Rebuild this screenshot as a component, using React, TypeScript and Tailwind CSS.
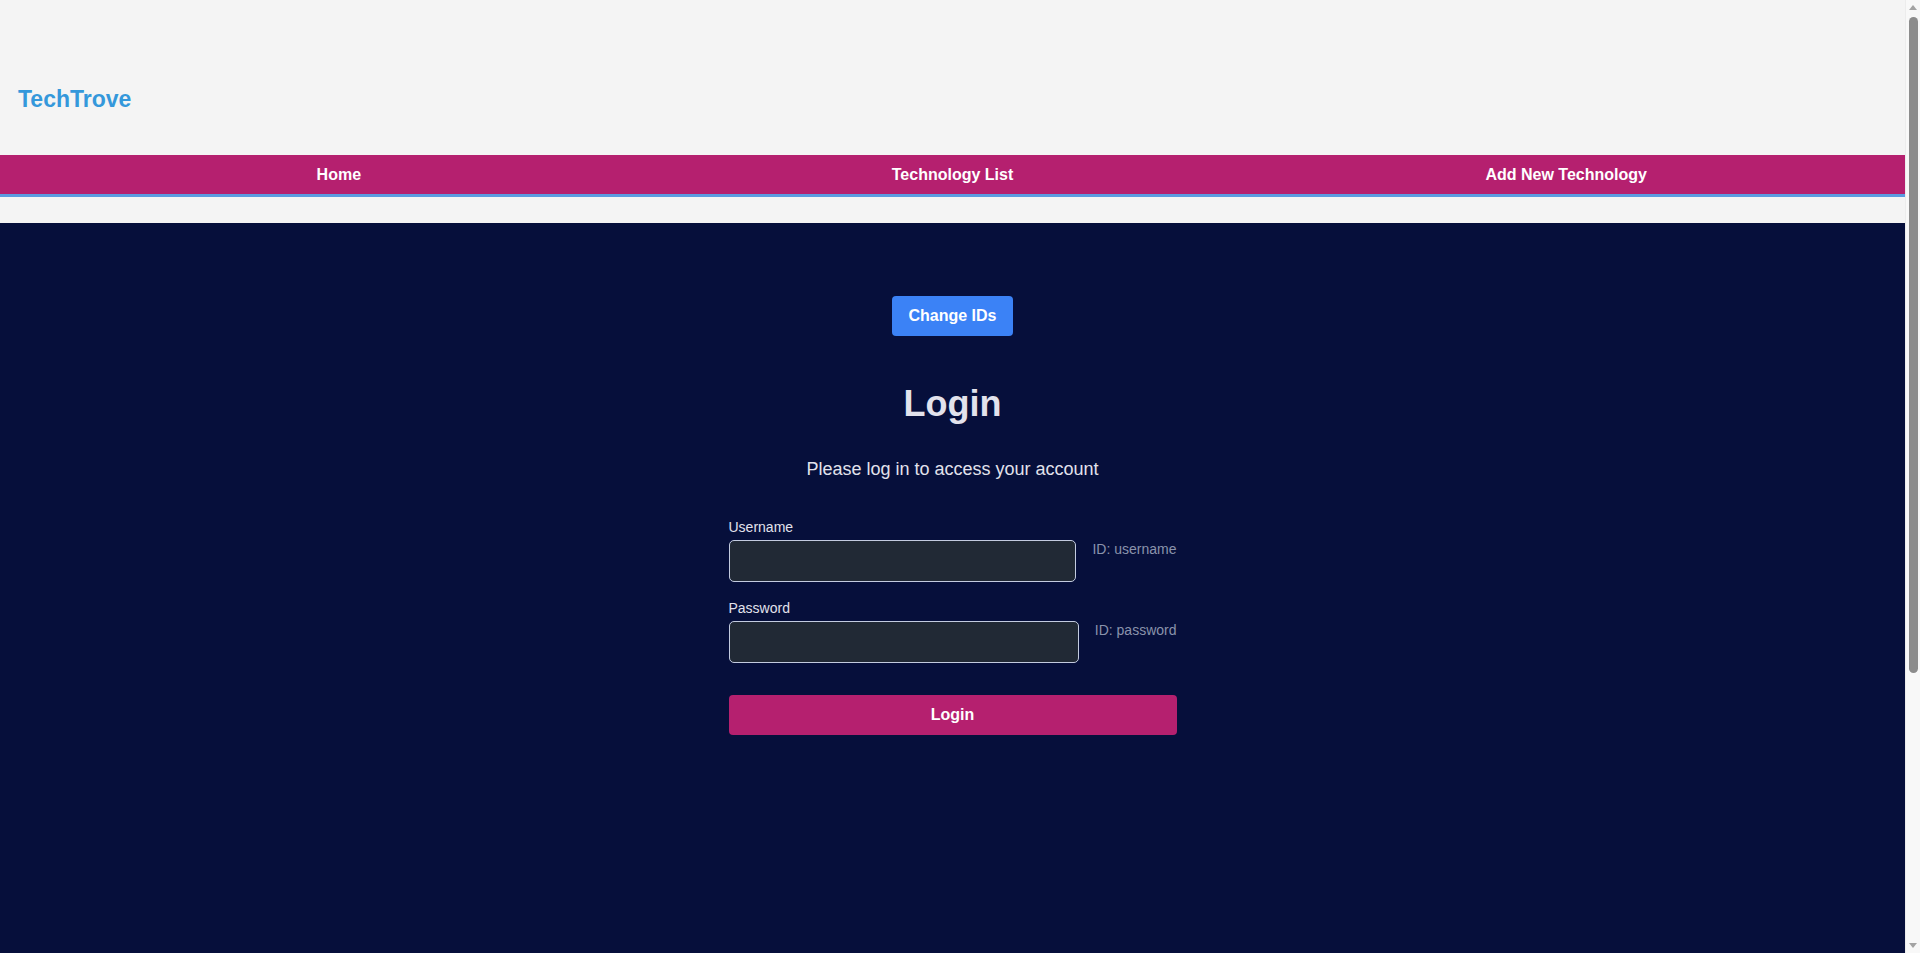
import { useState } from 'react'

function Field({ label, id, type = 'text' }: { label: string; id: string; type?: string }) {
  const [value, setValue] = useState('')
  return (
    <div>
      <label className="block text-sm leading-5 text-[#e2e2ec] mb-[3px]">{label}</label>
      <div className="flex items-start gap-4">
        <input
          type={type}
          value={value}
          onChange={(e) => setValue(e.target.value)}
          className="h-[42px] flex-1 rounded-[5px] border border-[#c3cbe0] bg-[#212935] px-3 text-[#e2e2ec] outline-none"
        />
        <span className="text-sm leading-5 text-[#8a93ab] mt-[-1px]">ID: {id}</span>
      </div>
    </div>
  )
}

export default function App() {
  return (
    <div className="flex h-screen overflow-hidden bg-[#f4f4f4] font-['Liberation_Sans',Arial,sans-serif]">
      <div className="flex-1 overflow-y-auto [scrollbar-width:none]">
        {/* Header */}
        <header className="h-[155px] px-[18px] pt-[85px]">
          <h1 className="text-[23px] leading-[28px] font-bold text-[#3498db]">TechTrove</h1>
        </header>

        {/* Nav */}
        <nav className="flex h-[42px] items-center bg-[#b5206f] border-b-[3px] border-[#5b9be0] px-8">
          {['Home', 'Technology List', 'Add New Technology'].map((item) => (
            <a key={item} href="#" className="flex-1 text-center text-base font-bold text-white">
              {item}
            </a>
          ))}
        </nav>

        <div className="h-[26px]" />

        {/* Login */}
        <main className="min-h-[1102px] bg-[#060f3b] flex flex-col items-center pt-[73px]">
          <button className="h-10 w-[121px] rounded bg-[#3b82f6] text-base font-bold text-white">
            Change IDs
          </button>

          <h2 className="mt-12 text-4xl leading-10 font-bold text-[#e2e2ec]">Login</h2>
          <p className="mt-[31px] text-lg leading-7 text-[#e2e2ec]">Please log in to access your account</p>

          <form className="mt-[34px] w-[448px]" onSubmit={(e) => e.preventDefault()}>
            <div className="mb-4">
              <Field label="Username" id="username" />
            </div>
            <Field label="Password" id="password" type="password" />

            <button
              type="submit"
              className="mt-8 h-10 w-full rounded bg-[#b5206f] text-base font-bold text-white"
            >
              Login
            </button>
          </form>
        </main>
      </div>

      {/* scrollbar */}
      <div className="flex w-[15px] flex-col items-center bg-[#f8f8f8] border-l border-[#ececec]">
        <div className="mt-[5px] h-0 w-0 border-x-[4px] border-b-[5px] border-x-transparent border-b-[#a3a3a3]" />
        <div className="mt-[7px] h-[656px] w-[9px] rounded-full bg-[#8c8c8c]" />
        <div className="flex-1" />
        <div className="mb-[5px] h-0 w-0 border-x-[4px] border-t-[5px] border-x-transparent border-t-[#a3a3a3]" />
      </div>
    </div>
  )
}
